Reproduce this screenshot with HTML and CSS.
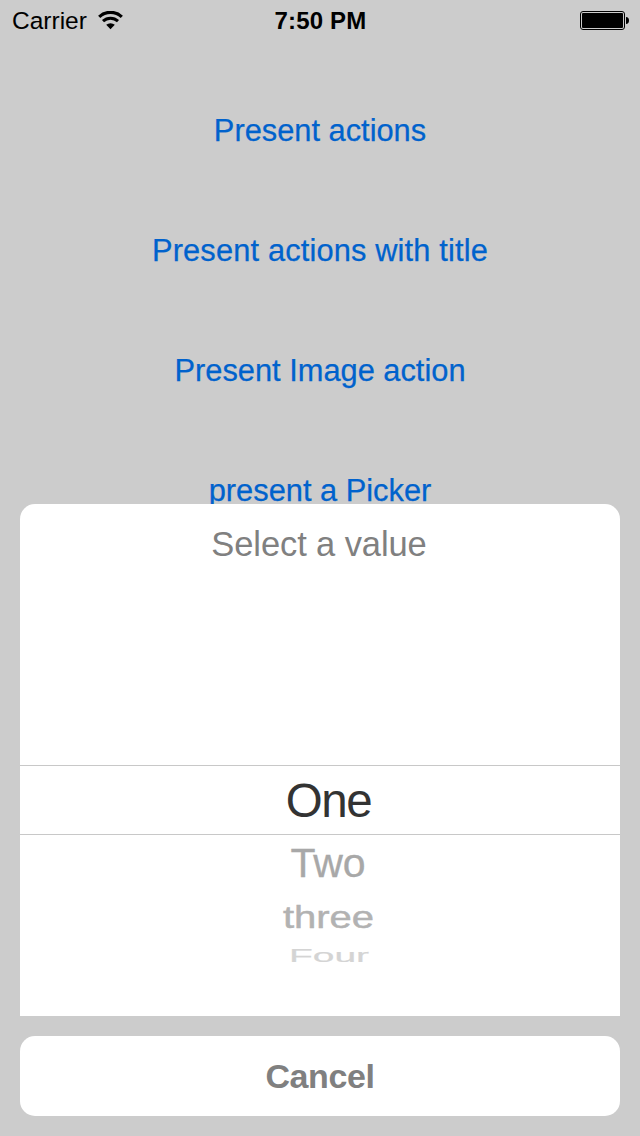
FILE: index.html
```html
<!DOCTYPE html>
<html lang="en">
<head>
<meta charset="utf-8">
<title>Picker</title>
<link rel="stylesheet" href="styles.css">
</head>
<body>
<div class="screen">
  <header class="status">
    <div class="status-left">
      <span class="carrier">Carrier</span>
      <svg class="wifi" width="26" height="20" viewBox="0 0 26 20">
        <path d="M1.2 5.8 A16.5 16.5 0 0 1 23.8 5.8" fill="none" stroke="#000" stroke-width="3.2"/>
        <path d="M5 10.2 A11 11 0 0 1 20 10.2" fill="none" stroke="#000" stroke-width="3"/>
        <path d="M8.2 13.8 A6.4 6.4 0 0 1 16.8 13.8 L12.5 18.3 Z"/>
      </svg>
    </div>
    <span class="time">7:50 PM</span>
    <div class="status-right">
      <svg class="battery" width="50" height="20" viewBox="0 0 50 20">
        <rect x=".5" y=".5" width="44" height="18" rx="2.5" fill="none" stroke="#000"/>
        <rect x="2" y="2" width="41" height="15" rx="1"/>
        <path d="M46 6 Q49 6.4 49 9.5 Q49 12.6 46 13 Z"/>
      </svg>
    </div>
  </header>
  <main class="links">
    <a class="link">Present actions</a>
    <a class="link wide">Present actions with title</a>
    <a class="link">Present Image action</a>
    <a class="link">present a Picker</a>
  </main>
  <section class="sheet">
    <div class="picker">
      <h1 class="title">Select a value</h1>
      <div class="wheel">
        <div class="row selected"><span class="value one">One</span></div>
        <div class="row second"><span class="value two">Two</span></div>
        <div class="row third"><span class="value three">three</span></div>
        <div class="row fourth"><span class="value four">Four</span></div>
      </div>
    </div>
    <button class="cancel">Cancel</button>
  </section>
</div>
</body>
</html>
```
FILE: styles.css
```css
* { box-sizing: border-box; }
body { margin: 0; }

.screen {
  position: relative;
  width: 640px;
  height: 1136px;
  overflow: hidden;
  background: #ccc;
  font-family: "Liberation Sans", Arial, sans-serif;
}

.status {
  display: grid;
  grid-template-columns: 1fr auto 1fr;
  align-items: center;
  height: 42px;
  padding: 0 11px 0 12px;
  font-size: 24px;
  line-height: 42px;
}
.status-left { display: flex; align-items: center; gap: 11px; }
.carrier { font-size: 24.5px; width: 75px; }
.time { font-weight: 700; letter-spacing: .15px; }
.status-right { display: flex; justify-content: flex-end; }
.battery { margin-right: -1px; }

.links {
  display: flex;
  flex-direction: column;
  align-items: center;
  gap: 60px;
  padding-top: 59px;
}
.link {
  height: 60px;
  line-height: 60px;
  font-size: 30.8px;
  color: #0062cc;
  -webkit-text-stroke: .25px #0062cc;
  white-space: nowrap;
}
.wide { letter-spacing: .15px; }

/* The sheet overlays the list of links. */
.sheet {
  position: absolute;
  left: 20px;
  right: 20px;
  bottom: 20px;
  display: flex;
  flex-direction: column;
  gap: 20px;
}
.picker {
  height: 512px;
  background: #fff;
  border-radius: 15px 15px 0 0;
}
.title {
  margin: 0;
  height: 80px;
  line-height: 81px;
  padding-right: 2px;
  font-size: 34.5px;
  font-weight: 400;
  letter-spacing: -.1px;
  text-align: center;
  color: #808080;
}
.wheel { padding-top: 181px; }
.row { display: flex; justify-content: center; align-items: center; }
.value { display: block; white-space: nowrap; font-size: 40px; line-height: 1; }
.selected {
  height: 70px;
  padding-top: 2px;
  border-top: 1px solid #c8c8c8;
  border-bottom: 1px solid #c8c8c8;
}
.second { height: 57px; }
.third { height: 50px; }
.fourth { height: 27px; }
.one { font-size: 47.5px; letter-spacing: -1.5px; color: #333; padding-left: 17px; }
.two { font-size: 41px; color: #a8a8a8; padding-left: 16px; -webkit-text-stroke: .3px #a8a8a8; }
.three { color: #b2b2b2; padding-left: 17px; transform: scaleY(.77); -webkit-text-stroke: .6px #b2b2b2; }
.four { font-size: 39px; color: #d4d4d4; padding-left: 18px; transform: scaleY(.49); -webkit-text-stroke: .4px #d4d4d4; }

.cancel {
  height: 80px;
  padding: 0;
  border: 0;
  border-radius: 15px;
  background: #fff;
  font: bold 34px/80px "Liberation Sans", Arial, sans-serif;
  letter-spacing: -.4px;
  color: #808080;
}
```
